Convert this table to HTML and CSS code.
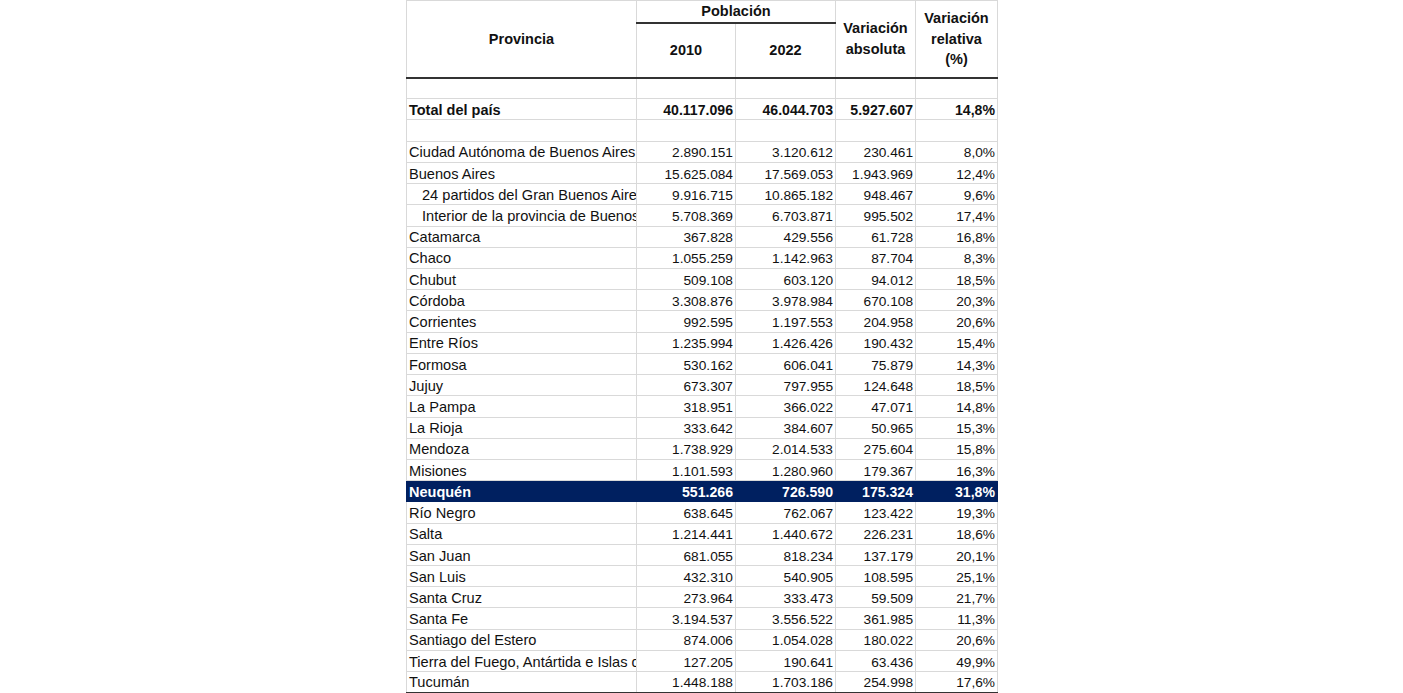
FILE: index.html
```
<!DOCTYPE html>
<html lang="es">
<head>
<meta charset="utf-8">
<title>Población por provincia</title>
<link rel="stylesheet" href="styles.css">
</head>
<body>
<div class="sheet">
<table class="grid">
<colgroup>
<col class="c-prov"><col class="c-y1"><col class="c-y2"><col class="c-abs"><col class="c-rel">
</colgroup>
<thead>
<tr class="h1">
<th rowspan="2" class="hd-main">Provincia</th>
<th colspan="2" class="hd-group">Población</th>
<th rowspan="2" class="hd-main">Variación<br>absoluta</th>
<th rowspan="2" class="hd-main">Variación<br>relativa<br>(%)</th>
</tr>
<tr class="h2">
<th class="hd-sub">2010</th>
<th class="hd-sub">2022</th>
</tr>
</thead>
<tbody>
<tr class="blank"><td></td><td></td><td></td><td></td><td></td></tr>
<tr class="total"><td class="name">Total del país</td><td class="num">40.117.096</td><td class="num">46.044.703</td><td class="num">5.927.607</td><td class="num">14,8%</td></tr>
<tr class="blank"><td></td><td></td><td></td><td></td><td></td></tr>
<tr><td class="name">Ciudad Autónoma de Buenos Aires</td><td class="num">2.890.151</td><td class="num">3.120.612</td><td class="num">230.461</td><td class="num">8,0%</td></tr>
<tr><td class="name">Buenos Aires</td><td class="num">15.625.084</td><td class="num">17.569.053</td><td class="num">1.943.969</td><td class="num">12,4%</td></tr>
<tr><td class="name sub">24 partidos del Gran Buenos Aires</td><td class="num">9.916.715</td><td class="num">10.865.182</td><td class="num">948.467</td><td class="num">9,6%</td></tr>
<tr><td class="name sub">Interior de la provincia de Buenos Aires</td><td class="num">5.708.369</td><td class="num">6.703.871</td><td class="num">995.502</td><td class="num">17,4%</td></tr>
<tr><td class="name">Catamarca</td><td class="num">367.828</td><td class="num">429.556</td><td class="num">61.728</td><td class="num">16,8%</td></tr>
<tr><td class="name">Chaco</td><td class="num">1.055.259</td><td class="num">1.142.963</td><td class="num">87.704</td><td class="num">8,3%</td></tr>
<tr><td class="name">Chubut</td><td class="num">509.108</td><td class="num">603.120</td><td class="num">94.012</td><td class="num">18,5%</td></tr>
<tr><td class="name">Córdoba</td><td class="num">3.308.876</td><td class="num">3.978.984</td><td class="num">670.108</td><td class="num">20,3%</td></tr>
<tr><td class="name">Corrientes</td><td class="num">992.595</td><td class="num">1.197.553</td><td class="num">204.958</td><td class="num">20,6%</td></tr>
<tr><td class="name">Entre Ríos</td><td class="num">1.235.994</td><td class="num">1.426.426</td><td class="num">190.432</td><td class="num">15,4%</td></tr>
<tr><td class="name">Formosa</td><td class="num">530.162</td><td class="num">606.041</td><td class="num">75.879</td><td class="num">14,3%</td></tr>
<tr><td class="name">Jujuy</td><td class="num">673.307</td><td class="num">797.955</td><td class="num">124.648</td><td class="num">18,5%</td></tr>
<tr><td class="name">La Pampa</td><td class="num">318.951</td><td class="num">366.022</td><td class="num">47.071</td><td class="num">14,8%</td></tr>
<tr><td class="name">La Rioja</td><td class="num">333.642</td><td class="num">384.607</td><td class="num">50.965</td><td class="num">15,3%</td></tr>
<tr><td class="name">Mendoza</td><td class="num">1.738.929</td><td class="num">2.014.533</td><td class="num">275.604</td><td class="num">15,8%</td></tr>
<tr><td class="name">Misiones</td><td class="num">1.101.593</td><td class="num">1.280.960</td><td class="num">179.367</td><td class="num">16,3%</td></tr>
<tr class="highlight"><td class="name">Neuquén</td><td class="num">551.266</td><td class="num">726.590</td><td class="num">175.324</td><td class="num">31,8%</td></tr>
<tr><td class="name">Río Negro</td><td class="num">638.645</td><td class="num">762.067</td><td class="num">123.422</td><td class="num">19,3%</td></tr>
<tr><td class="name">Salta</td><td class="num">1.214.441</td><td class="num">1.440.672</td><td class="num">226.231</td><td class="num">18,6%</td></tr>
<tr><td class="name">San Juan</td><td class="num">681.055</td><td class="num">818.234</td><td class="num">137.179</td><td class="num">20,1%</td></tr>
<tr><td class="name">San Luis</td><td class="num">432.310</td><td class="num">540.905</td><td class="num">108.595</td><td class="num">25,1%</td></tr>
<tr><td class="name">Santa Cruz</td><td class="num">273.964</td><td class="num">333.473</td><td class="num">59.509</td><td class="num">21,7%</td></tr>
<tr><td class="name">Santa Fe</td><td class="num">3.194.537</td><td class="num">3.556.522</td><td class="num">361.985</td><td class="num">11,3%</td></tr>
<tr><td class="name">Santiago del Estero</td><td class="num">874.006</td><td class="num">1.054.028</td><td class="num">180.022</td><td class="num">20,6%</td></tr>
<tr><td class="name">Tierra del Fuego, Antártida e Islas del Atlántico Sur</td><td class="num">127.205</td><td class="num">190.641</td><td class="num">63.436</td><td class="num">49,9%</td></tr>
<tr class="last"><td class="name">Tucumán</td><td class="num">1.448.188</td><td class="num">1.703.186</td><td class="num">254.998</td><td class="num">17,6%</td></tr>
</tbody>
</table>
</div>
</body>
</html>
```
FILE: styles.css
```
html, body {
  margin: 0;
  padding: 0;
  background: #ffffff;
}

body {
  font-family: "Liberation Sans", Arial, sans-serif;
  color: #111111;
  overflow: hidden;
}

.sheet {
  display: flex;
  justify-content: center;
  padding-left: 1px;
}

.grid {
  border-collapse: collapse;
  table-layout: fixed;
  width: 591px;
}

.c-prov { width: 230px; }
.c-y1 { width: 99px; }
.c-y2 { width: 100px; }
.c-abs { width: 80px; }
.c-rel { width: 82px; }

.grid th,
.grid td {
  border: 1px solid #d9d9d9;
  padding: 0;
  overflow: hidden;
  white-space: nowrap;
}

/* header */
.grid th {
  font-weight: bold;
  font-size: 14.5px;
  line-height: 20.5px;
  text-align: center;
  vertical-align: middle;
  color: #111111;
}

.h1 { height: 21px; }
.h2 { height: 55px; }

.hd-main,
.hd-group,
.hd-sub {
  border-bottom: 2px solid #333333 !important;
}

.hd-main {
  padding-bottom: 1px;
}

.hd-sub {
  padding-top: 1px;
}

/* body */
.grid tbody tr {
  height: 21.22px;
}

.grid td {
  vertical-align: bottom;
  line-height: 17px;
  padding: 0 2px 0.5px 2px;
}

.name {
  font-size: 14.6px;
  text-align: left;
  text-overflow: clip;
}

.name.sub {
  padding-left: 15px;
}

.num {
  font-size: 13.7px;
  text-align: right;
}

.total td {
  font-weight: bold;
}

.total .num {
  font-size: 14.1px;
}

.total .name {
  font-size: 14.5px;
}

.highlight td {
  background: #002060;
  color: #ffffff;
  font-weight: bold;
  border-color: #002060;
}

.highlight .num {
  font-size: 14.1px;
}

.highlight .name {
  font-size: 14.5px;
}

.last td {
  border-bottom: 2px solid #333333;
}
```
